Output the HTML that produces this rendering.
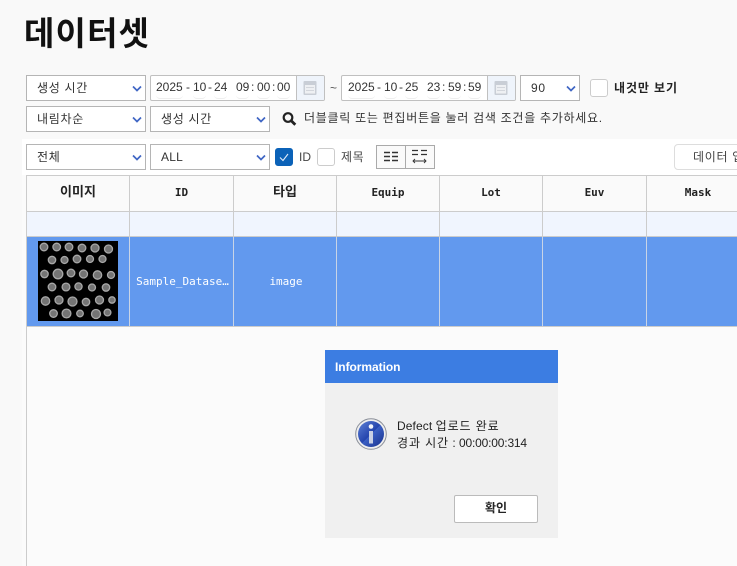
<!DOCTYPE html>
<html lang="ko"><head><meta charset="utf-8"><style>
html,body{margin:0;padding:0;width:737px;height:566px;overflow:hidden;background:#f9f9f9}
body{position:relative;font-family:"Liberation Sans","Noto Sans CJK KR",sans-serif;font-size:12px;color:#222}
.a{position:absolute;box-sizing:border-box;white-space:nowrap}
.s{height:26px;border:1px solid #b5b5b5;background:#fff;line-height:24px;padding-left:10px;color:#333;letter-spacing:.7px}
.s svg{position:absolute;right:1px;top:9px}
.d{height:26px;width:175px;border:1px solid #c0c0c0;border-radius:2px;background:#fff;overflow:hidden}
.d .c{position:absolute;right:0;top:0;width:27px;height:24px;background:#eff4fb;border-left:1px solid #c0c0c0}
.d span{position:absolute;top:0;line-height:23px;height:22px;color:#333}
.d span.u{border-bottom:1px solid #eee;border-radius:0 0 4px 4px}
.cb{width:18px;height:18px;border:1px solid #ccc;border-radius:3px;background:#fff}
.cell{position:absolute;box-sizing:border-box;border-right:1px solid #ccc;text-align:center;white-space:nowrap}
.h{top:176px;height:35px;line-height:34px;background:#fafafa;font-weight:bold;color:#222;font-family:"DejaVu Sans Mono",monospace;font-size:11px}
.k{font-family:"Liberation Sans","Noto Sans CJK KR",sans-serif;font-size:13px;letter-spacing:0;font-weight:bold;position:relative;top:-1px;color:#222}
.f{top:212px;height:24px;background:#f0f5fe}
.r{top:237px;height:89px;background:#6299ee;border-right-color:#c8d4e6;line-height:90px;color:#fff;font-family:"DejaVu Sans Mono",monospace;font-size:11px;padding-left:2px}
</style></head><body>
<div class="a" style="left:24px;top:12px;font-size:33px;font-weight:bold;color:#111;line-height:44px;letter-spacing:1.200px">데이터셋</div>

<div class="a s" style="left:26px;top:75px;width:120px">생성 시간<svg width="12" height="8"><path d="M1 1.500L5 5.500 9 1.500" fill="none" stroke="#3f66c4" stroke-width="1.700"/></svg></div>
<div class="a d" style="left:150px;top:75px"><span class="u" style="left:5px">2025</span><span style="left:35px">-</span><span class="u" style="left:42px">10</span><span style="left:57px">-</span><span class="u" style="left:63px">24</span><span class="u" style="left:85px">09</span><span style="left:100px">:</span><span class="u" style="left:106px">00</span><span style="left:121px">:</span><span class="u" style="left:126px">00</span><div class="c"><svg width="26" height="24"><rect x="6.500" y="5" width="13" height="14" rx="1" fill="#c9ced6"/><rect x="8" y="9" width="10" height="8.500" fill="#eef0f3"/><path d="M9.500 11.500h7M9.500 14.500h7" stroke="#b8bdc6" stroke-dasharray="1 1"/></svg></div></div>
<div class="a" style="left:330px;top:81px;color:#555">~</div>
<div class="a d" style="left:341px;top:75px"><span class="u" style="left:6px">2025</span><span style="left:35px">-</span><span class="u" style="left:42px">10</span><span style="left:57px">-</span><span class="u" style="left:63px">25</span><span class="u" style="left:85px">23</span><span style="left:100px">:</span><span class="u" style="left:106px">59</span><span style="left:121px">:</span><span class="u" style="left:126px">59</span><div class="c"><svg width="26" height="24"><rect x="6.500" y="5" width="13" height="14" rx="1" fill="#c9ced6"/><rect x="8" y="9" width="10" height="8.500" fill="#eef0f3"/><path d="M9.500 11.500h7M9.500 14.500h7" stroke="#b8bdc6" stroke-dasharray="1 1"/></svg></div></div>
<div class="a s" style="left:520px;top:75px;width:60px">90<svg width="12" height="8"><path d="M1 1.500L5 5.500 9 1.500" fill="none" stroke="#3f66c4" stroke-width="1.700"/></svg></div>
<div class="a cb" style="left:590px;top:79px"></div>
<div class="a" style="left:614px;top:79px;line-height:18px;font-weight:bold;color:#222;letter-spacing:.9px">내것만 보기</div>

<div class="a s" style="left:26px;top:106px;width:120px">내림차순<svg width="12" height="8"><path d="M1 1.500L5 5.500 9 1.500" fill="none" stroke="#3f66c4" stroke-width="1.700"/></svg></div>
<div class="a s" style="left:150px;top:106px;width:120px">생성 시간<svg width="12" height="8"><path d="M1 1.500L5 5.500 9 1.500" fill="none" stroke="#3f66c4" stroke-width="1.700"/></svg></div>
<svg class="a" style="left:281px;top:111px" width="16" height="16"><circle cx="7" cy="6.500" r="4.300" fill="none" stroke="#222" stroke-width="2.200"/><path d="M10.500 10L14.300 13.800" stroke="#222" stroke-width="2.800"/></svg>
<div class="a" style="left:304px;top:109px;line-height:18px;color:#333;letter-spacing:.72px">더블클릭 또는 편집버튼을 눌러 검색 조건을 추가하세요.</div>

<div class="a" style="left:22px;top:139px;width:715px;height:36px;background:#fff"></div>
<div class="a" style="left:22px;top:175px;width:715px;height:391px;background:#fbfbfb"></div>
<div class="a s" style="left:26px;top:144px;width:120px">전체<svg width="12" height="8"><path d="M1 1.500L5 5.500 9 1.500" fill="none" stroke="#3f66c4" stroke-width="1.700"/></svg></div>
<div class="a s" style="left:150px;top:144px;width:120px;letter-spacing:.2px">ALL<svg width="12" height="8"><path d="M1 1.500L5 5.500 9 1.500" fill="none" stroke="#3f66c4" stroke-width="1.700"/></svg></div>
<div class="a cb" style="left:275px;top:148px;background:#0b62b8;border-color:#0b62b8"><svg width="16" height="16" style="display:block"><path d="M4 8.500L7 11.500 12 5" fill="none" stroke="#dfeaf8" stroke-width="1.100"/></svg></div>
<div class="a" style="left:299px;top:148px;line-height:18px;color:#444">ID</div>
<div class="a cb" style="left:317px;top:148px"></div>
<div class="a" style="left:341px;top:148px;line-height:18px;color:#444;letter-spacing:.6px">제목</div>
<div class="a" style="left:376px;top:145px;width:59px;height:24px;border:1px solid #aaa;background:#fafafa"></div>
<div class="a" style="left:405px;top:145px;width:1px;height:24px;background:#aaa"></div>
<svg class="a" style="left:377px;top:146px" width="58" height="22"><path d="M7 6.500h6M15 6.500h6M7 10.500h6M15 10.500h6M7 14.500h6M15 14.500h6" stroke="#333" stroke-width="1.400"/><path d="M35 4.500h6M44 4.500h6M35 8.500h6M44 8.500h6" stroke="#333" stroke-width="1.200"/><path d="M36 15h13M38 13l-2 2 2 2M47 13l2 2-2 2" fill="none" stroke="#333" stroke-width=".9"/></svg>
<div class="a" style="left:674px;top:144px;width:80px;height:26px;border:1px solid #ddd;border-radius:4px;background:#fff;line-height:24px;padding-left:18px;color:#444;letter-spacing:.7px">데이터 업로드</div>

<div class="a" style="left:26px;top:175px;width:1px;height:391px;background:#ccc"></div>
<div class="a" style="left:26px;top:175px;width:711px;height:1px;background:#ccc"></div>
<div class="a" style="left:26px;top:211px;width:711px;height:1px;background:#ccc"></div>
<div class="a" style="left:26px;top:236px;width:711px;height:1px;background:#ccc"></div>
<div class="a" style="left:26px;top:326px;width:711px;height:1px;background:#ccc"></div>

<div class="cell h" style="left:27px;width:103px"><span class="k">이미지</span></div>
<div class="cell h" style="left:130px;width:104px">ID</div>
<div class="cell h" style="left:234px;width:103px"><span class="k">타입</span></div>
<div class="cell h" style="left:337px;width:103px">Equip</div>
<div class="cell h" style="left:440px;width:103px">Lot</div>
<div class="cell h" style="left:543px;width:104px">Euv</div>
<div class="cell h" style="left:647px;width:103px">Mask</div>

<div class="cell f" style="left:27px;width:103px"></div>
<div class="cell f" style="left:130px;width:104px"></div>
<div class="cell f" style="left:234px;width:103px"></div>
<div class="cell f" style="left:337px;width:103px"></div>
<div class="cell f" style="left:440px;width:103px"></div>
<div class="cell f" style="left:543px;width:104px"></div>
<div class="cell f" style="left:647px;width:103px"></div>

<div class="cell r" style="left:27px;width:103px"></div>
<div class="cell r" style="left:130px;width:104px">Sample_Datase…</div>
<div class="cell r" style="left:234px;width:103px">image</div>
<div class="cell r" style="left:337px;width:103px"></div>
<div class="cell r" style="left:440px;width:103px"></div>
<div class="cell r" style="left:543px;width:104px"></div>
<div class="cell r" style="left:647px;width:103px"></div>

<svg class="a" style="left:38px;top:241px" width="80" height="80" viewBox="0 0 80 80"><rect width="80" height="80" fill="#000"/>
<g fill="#747474" stroke="#a8a8a8" stroke-width="1.300">
<circle cx="6" cy="6" r="3.800"/><circle cx="18.700" cy="6" r="3.800"/><circle cx="31" cy="6" r="3.800"/><circle cx="44" cy="7" r="3.800"/><circle cx="57" cy="7" r="4"/><circle cx="70.500" cy="8" r="4"/>
<circle cx="14" cy="19" r="3.700"/><circle cx="26.500" cy="19" r="3.500"/><circle cx="39" cy="18" r="3.800"/><circle cx="52" cy="18" r="3.500"/><circle cx="64.500" cy="18" r="3.500"/>
<circle cx="6.500" cy="33" r="3.700"/><circle cx="20" cy="33" r="4.800"/><circle cx="33" cy="32" r="3.800"/><circle cx="45.500" cy="33" r="4"/><circle cx="59.500" cy="34" r="4.200"/><circle cx="73" cy="34" r="3.500"/>
<circle cx="14" cy="46" r="3.800"/><circle cx="28" cy="46" r="3.900"/><circle cx="40.500" cy="45.500" r="3.600"/><circle cx="54" cy="46.500" r="3.500"/><circle cx="68" cy="46.500" r="3.700"/>
<circle cx="7.500" cy="60" r="4.200"/><circle cx="21" cy="59" r="4"/><circle cx="34.500" cy="60.500" r="4.500"/><circle cx="48" cy="61" r="3.700"/><circle cx="61.500" cy="59" r="4"/><circle cx="74" cy="59" r="3.200"/>
<circle cx="15.500" cy="72.500" r="3.800"/><circle cx="28.500" cy="72.500" r="4.400"/><circle cx="42" cy="72.500" r="3.300"/><circle cx="58" cy="73" r="4.500"/><circle cx="69.500" cy="71.500" r="3.400"/>
</g></svg>

<div class="a" style="left:325px;top:350px;width:233px;height:188px;background:#f0f0f0"></div>
<div class="a" style="left:325px;top:350px;width:233px;height:33px;background:#3c7de2;color:#fff;font-weight:bold;line-height:34px;padding-left:10px;letter-spacing:-.05px">Information</div>
<svg class="a" style="left:355px;top:418px" width="32" height="32" viewBox="0 0 32 32"><defs><linearGradient id="g" x1="0" y1="0" x2="1" y2="1"><stop offset="0" stop-color="#5f82d6"/><stop offset=".5" stop-color="#2444ad"/><stop offset=".51" stop-color="#3a5fc4"/><stop offset="1" stop-color="#17308c"/></linearGradient></defs><circle cx="16" cy="16" r="15.300" fill="#eee" stroke="#8a8f99"/><circle cx="16" cy="16" r="13" fill="url(#g)"/><circle cx="16" cy="8.500" r="2.300" fill="#f3f5fb"/><path d="M14 13h4v12.500h-4z" fill="#c9d0e4"/></svg>
<div class="a" style="left:397px;top:418px;line-height:17px;color:#222"><span style="letter-spacing:.1px">Defect</span> <span style="letter-spacing:.9px">업로드 완료</span><br><span style="letter-spacing:.9px">경과 시간</span> : <span style="letter-spacing:-.18px">00:00:00:314</span></div>
<div class="a" style="left:454px;top:495px;width:84px;height:28px;background:#fff;border:1px solid #bbb;border-radius:2px;text-align:center;line-height:25px;font-weight:bold;color:#222">확인</div>
</body></html>
